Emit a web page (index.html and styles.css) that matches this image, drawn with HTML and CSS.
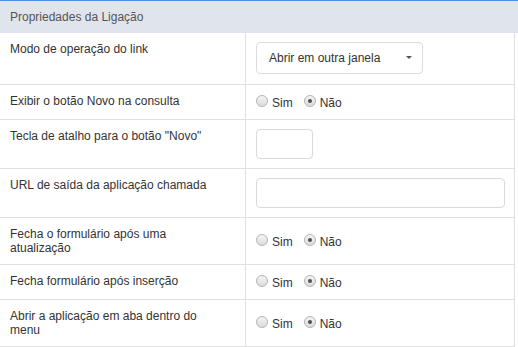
FILE: index.html
```html
<!DOCTYPE html>
<html lang="pt">
<head>
<meta charset="utf-8">
<title>Propriedades da Ligação</title>
<link rel="stylesheet" href="styles.css">
</head>
<body>
<div class="panel">
  <div class="panel-title">Propriedades da Ligação</div>
  <div class="props">
    <div class="label">Modo de operação do link</div>
    <div class="field field-select">
      <div class="select"><span>Abrir em outra janela</span><span class="caret"></span></div>
    </div>

    <div class="label">Exibir o botão Novo na consulta</div>
    <div class="field field-radio">
      <div class="radios">
        <span class="opt"><span class="radio"></span>Sim</span>
        <span class="opt"><span class="radio checked"></span>Não</span>
      </div>
    </div>

    <div class="label">Tecla de atalho para o botão "Novo"</div>
    <div class="field">
      <div class="input input-short"></div>
    </div>

    <div class="label">URL de saída da aplicação chamada</div>
    <div class="field">
      <div class="input input-full"></div>
    </div>

    <div class="label">Fecha o formulário após uma atualização</div>
    <div class="field field-radio">
      <div class="radios">
        <span class="opt"><span class="radio"></span>Sim</span>
        <span class="opt"><span class="radio checked"></span>Não</span>
      </div>
    </div>

    <div class="label">Fecha formulário após inserção</div>
    <div class="field field-radio">
      <div class="radios">
        <span class="opt"><span class="radio"></span>Sim</span>
        <span class="opt"><span class="radio checked"></span>Não</span>
      </div>
    </div>

    <div class="label">Abrir a aplicação em aba dentro do menu</div>
    <div class="field field-radio">
      <div class="radios">
        <span class="opt"><span class="radio"></span>Sim</span>
        <span class="opt"><span class="radio checked"></span>Não</span>
      </div>
    </div>
  </div>
</div>
</body>
</html>
```

FILE: styles.css
```css
html, body {
  margin: 0;
  padding: 0;
  background: #ffffff;
}

body {
  font-family: "Liberation Sans", Arial, sans-serif;
  font-size: 12px;
  line-height: 14px;
  color: #333333;
}

.panel {
  width: 518px;
}

.panel-title {
  border-top: 1px solid #4a90e2;
  background: #e0e4ec;
  color: #555555;
  padding: 9px 10px 9px 10px;
}

.props {
  display: grid;
  grid-template-columns: 245px 270px;
  width: 515px;
}

.label {
  padding: 9px 25px 9px 10px;
  border-bottom: 1px solid #e0e0e0;
}

.field {
  padding: 9px 9px 9px 10px;
  border-left: 1px solid #e0e0e0;
  border-right: 1px solid #e0e0e0;
  border-bottom: 1px solid #e0e0e0;
}

.field-select {
  padding-bottom: 10px;
}

.field-radio {
  display: flex;
  align-items: center;
  padding-top: 8px;
  padding-bottom: 8px;
}

.select {
  box-sizing: border-box;
  width: 167px;
  height: 32px;
  border: 1px solid #dcdcdc;
  border-radius: 4px;
  display: flex;
  align-items: center;
  justify-content: space-between;
  padding: 0 10px 0 12px;
  color: #333333;
}

.caret {
  width: 0;
  height: 0;
  border-left: 3px solid transparent;
  border-right: 3px solid transparent;
  border-top: 3px solid #555555;
  margin-top: -1px;
}

.input {
  box-sizing: border-box;
  height: 30px;
  border: 1px solid #d9d9d9;
  border-radius: 4px;
  background: #ffffff;
}

.input-short {
  width: 57px;
}

.input-full {
  width: 100%;
}

.radios {
  display: flex;
  gap: 11px;
  padding-top: 2px;
  line-height: 16px;
}

.opt {
  display: inline-block;
  white-space: nowrap;
}

.radio {
  display: inline-block;
  box-sizing: border-box;
  width: 12px;
  height: 12px;
  margin-right: 4px;
  border: 1px solid #b4b4b4;
  border-radius: 50%;
  background: linear-gradient(#f4f4f4, #dcdcdc);
  vertical-align: baseline;
  position: relative;
}

.radio.checked::after {
  content: "";
  position: absolute;
  left: 3px;
  top: 3px;
  width: 4px;
  height: 4px;
  border-radius: 50%;
  background: #505050;
}
```
